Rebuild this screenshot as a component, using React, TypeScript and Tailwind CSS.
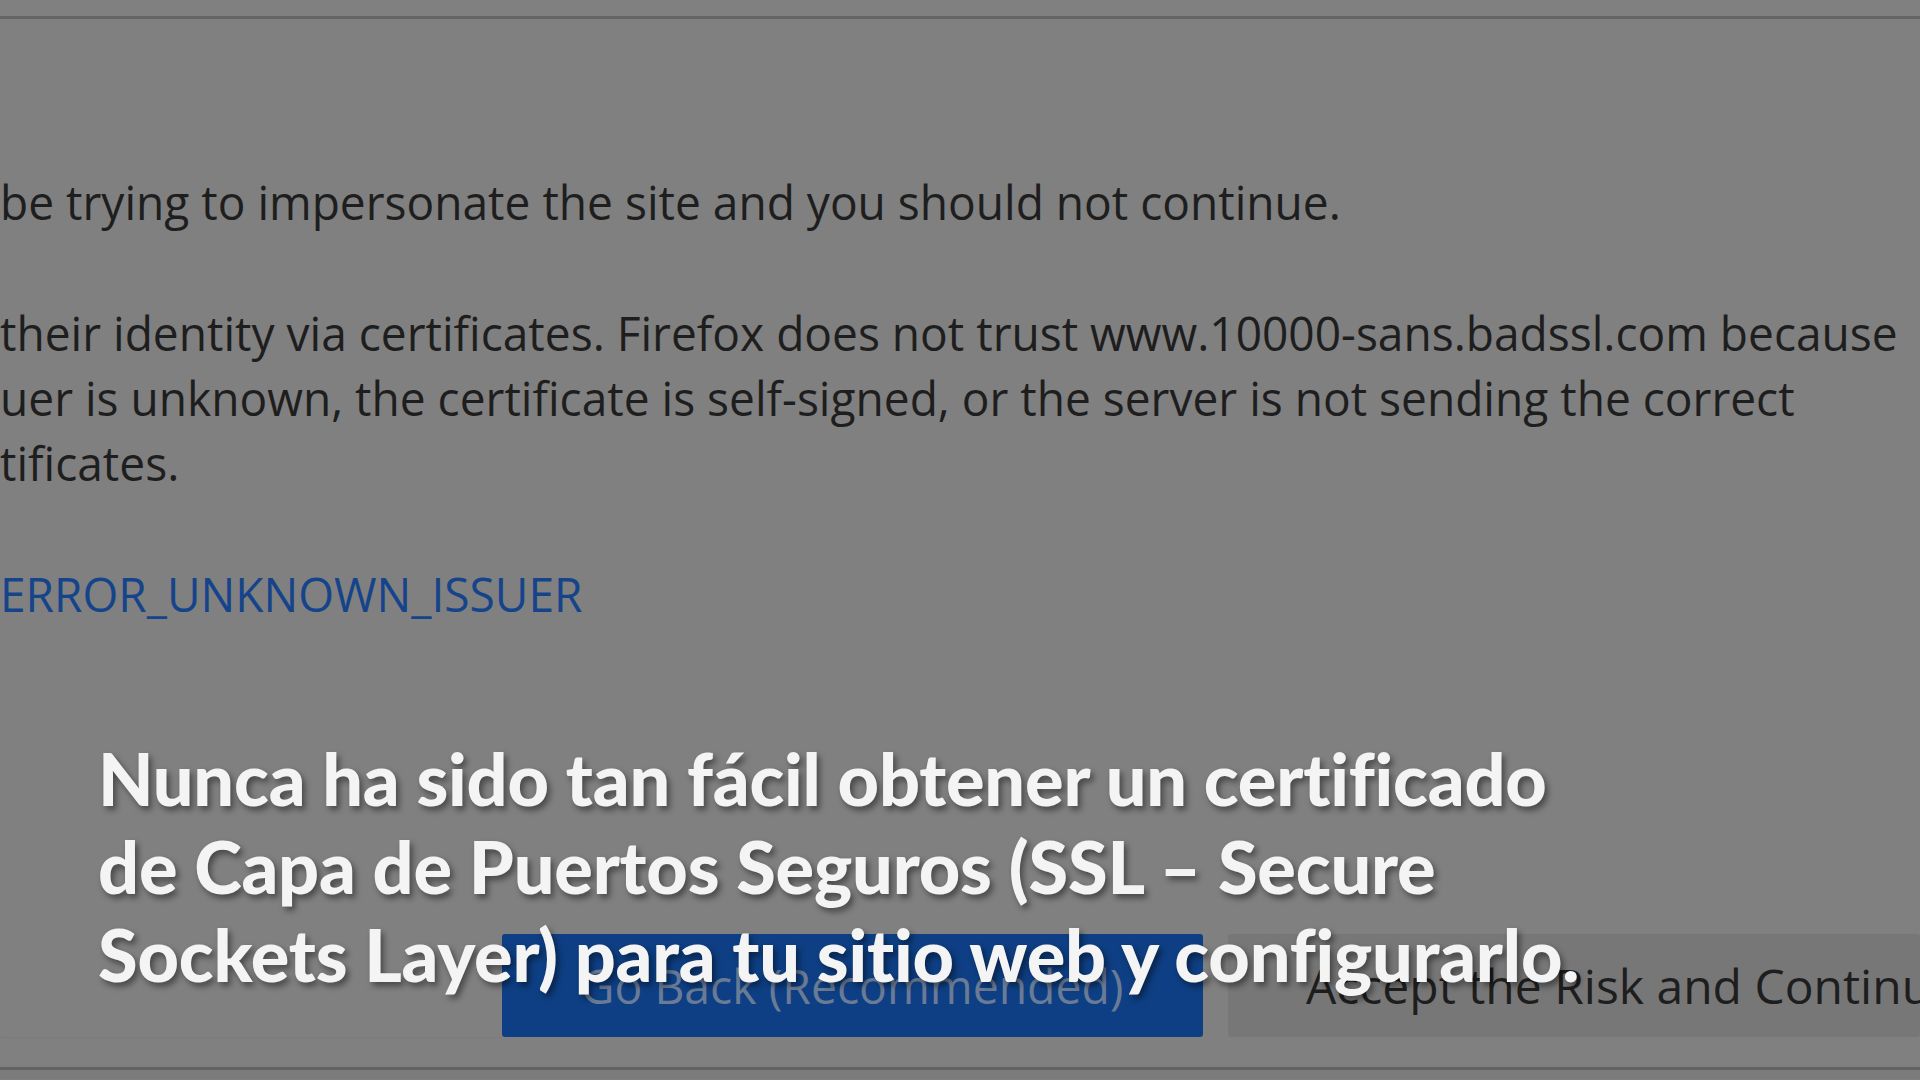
const body = "font-['Open_Sans',sans-serif]";

const Paragraph = ({ lines, className = '' }: { lines: string[]; className?: string }) => (
  <div className={`origin-left scale-x-[0.96] ${className}`}>
    {lines.map((l) => (
      <p key={l} className="whitespace-nowrap leading-[65px]">
        {l}
      </p>
    ))}
  </div>
);

export default function App() {
  return (
    <div className="relative w-[1920px] h-[1080px] overflow-hidden bg-[#808080]">
      {/* toolbar edge */}
      <div className="h-[16px]" />
      <div className="h-[3px] bg-[#656565]" />

      {/* error page content */}
      <div className={`${body} text-[48px] text-[#1e1e1e] pt-[150px]`}>
        <Paragraph lines={['be trying to impersonate the site and you should not continue.']} />
        <Paragraph
          className="mt-[66px]"
          lines={[
            'their identity via certificates. Firefox does not trust www.10000-sans.badssl.com because',
            'uer is unknown, the certificate is self-signed, or the server is not sending the correct',
            'tificates.',
          ]}
        />
        <Paragraph className="mt-[66px] text-[#16448a]" lines={['ERROR_UNKNOWN_ISSUER']} />
      </div>

      {/* action bar */}
      <div className="mt-[308px] flex h-[133px] flex-col">
        <div className="flex items-start">
          <div className="h-[104px] w-[502px] shrink-0 border-b border-dotted border-[#767676]" />
          <button className="flex h-[103px] w-[701px] shrink-0 items-center justify-center rounded-[3px] bg-[#0e3f84]">
            <span className={`${body} origin-center scale-x-[0.965] whitespace-nowrap text-[48px] text-[#6a7b95]`}>
              Go Back (Recommended)
            </span>
          </button>
          <button className="ml-[25px] flex h-[103px] min-w-0 flex-1 items-center overflow-hidden rounded-[3px] bg-[#777777] pl-[78px]">
            <span className={`${body} origin-left whitespace-nowrap text-[48px] text-[#1e1e1e]`}>
              Accept the Risk and Continue
            </span>
          </button>
        </div>
      </div>
      <div className="h-[3px] bg-[#626262]" />
      <div className="h-[9px] bg-[#7b7b7b]" />

      {/* subtitle overlay */}
      <div className="absolute left-[98px] top-[734px] font-['Lato',sans-serif] text-[72px] font-black leading-[88px] tracking-[-0.2px] text-[#f4f4f4] [text-shadow:3px_4px_6px_rgba(0,0,0,0.45)]">
        <p className="whitespace-nowrap">Nunca ha sido tan fácil obtener un certificado</p>
        <p className="whitespace-nowrap">de Capa de Puertos Seguros (SSL – Secure</p>
        <p className="whitespace-nowrap">Sockets Layer) para tu sitio web y configurarlo.</p>
      </div>
    </div>
  );
}
